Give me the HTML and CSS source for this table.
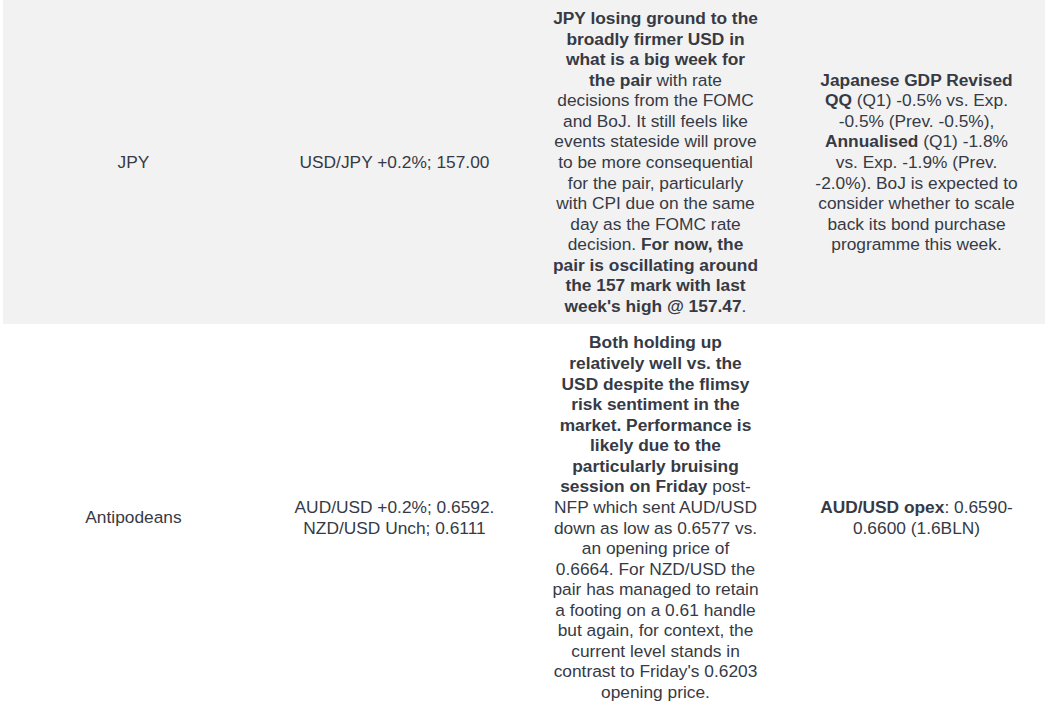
FILE: index.html
```html
<!DOCTYPE html>
<html>
<head>
<meta charset="utf-8">
<link rel="stylesheet" href="styles.css">
</head>
<body>
<table class="fx">
  <tr class="row shaded">
    <td class="cell">JPY</td>
    <td class="cell">USD/JPY +0.2%; 157.00</td>
    <td class="cell"><b>JPY losing ground to the broadly firmer USD in what is a big week for the pair</b> with rate decisions from the FOMC and BoJ. It still feels like events stateside will prove to be more consequential for the pair, particularly with CPI due on the same day as the FOMC rate decision. <b>For now, the pair is oscillating around the 157 mark with last week's high @ 157.47</b>.</td>
    <td class="cell"><b>Japanese GDP Revised QQ</b> (Q1) -0.5% vs. Exp. -0.5% (Prev. -0.5%), <b>Annualised</b> (Q1) -1.8% vs. Exp. -1.9% (Prev. -2.0%). BoJ is expected to consider whether to scale back its bond purchase programme this week.</td>
  </tr>
  <tr class="row">
    <td class="cell">Antipodeans</td>
    <td class="cell">AUD/USD +0.2%; 0.6592. NZD/USD Unch; 0.6111</td>
    <td class="cell"><b>Both holding up relatively well vs. the USD despite the flimsy risk sentiment in the market. Performance is likely due to the particularly bruising session on Friday</b> post-NFP which sent AUD/USD down as low as 0.6577 vs. an opening price of 0.6664. For NZD/USD the pair has managed to retain a footing on a 0.61 handle but again, for context, the current level stands in contrast to Friday's 0.6203 opening price.</td>
    <td class="cell"><b>AUD/USD opex</b>: 0.6590-0.6600 (1.6BLN)</td>
  </tr>
</table>
</body>
</html>
```
FILE: styles.css
```css
html, body {
  margin: 0;
  padding: 0;
  background: #ffffff;
}
.fx {
  margin-left: 3px;
  width: 1044px;
  table-layout: fixed;
  border-collapse: collapse;
  border-spacing: 0;
  font-family: "Liberation Sans", Arial, sans-serif;
  font-size: 17.33px;
  line-height: 20.57px;
  color: #363a45;
}
.row.shaded {
  background: #f2f2f2;
}
.cell {
  width: 25%;
  padding: 8px 26px;
  text-align: center;
  vertical-align: middle;
}
.cell b {
  font-weight: bold;
}
```
